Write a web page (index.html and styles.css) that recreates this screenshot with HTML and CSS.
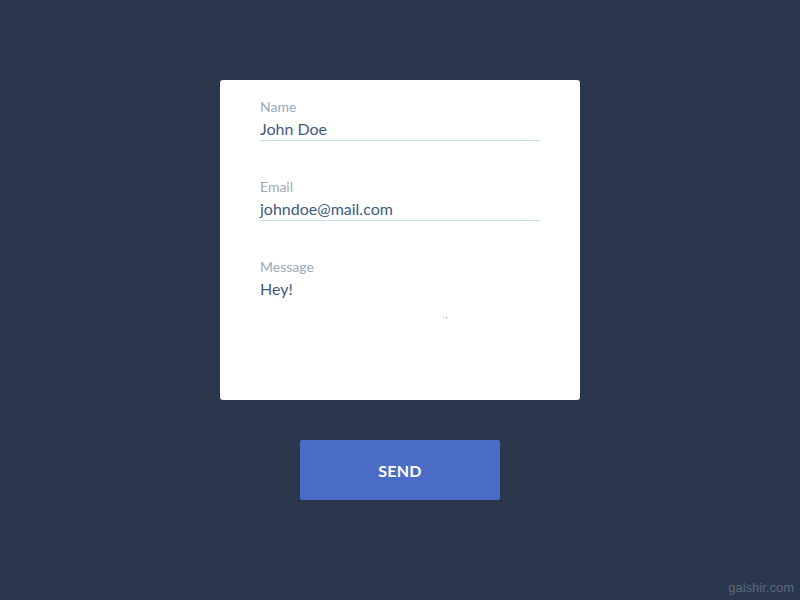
FILE: index.html
```html
<!DOCTYPE html>
<html>
<head>
<meta charset="utf-8">
<link rel="stylesheet" href="styles.css">
</head>
<body>
<div class="page">
  <form class="card">
    <div class="field">
      <div class="label">Name</div>
      <div class="value line">John Doe</div>
    </div>
    <div class="field">
      <div class="label">Email</div>
      <div class="value line">johndoe@mail.com</div>
    </div>
    <div class="field message">
      <div class="label">Message</div>
      <div class="value">Hey!</div>
      <div class="dot-row"><span class="dot"></span></div>
    </div>
  </form>
  <button class="send" type="button">SEND</button>
</div>
<div class="credit">galshir.com</div>
</body>
</html>
```
FILE: styles.css
```css
html, body {
  margin: 0;
  padding: 0;
  height: 100%;
}
body {
  background: #2a374d;
  font-family: Lato, "Open Sans", sans-serif;
  overflow: hidden;
}
.page {
  display: flex;
  flex-direction: column;
  align-items: center;
  padding-top: 80px;
}
.card {
  width: 360px;
  height: 320px;
  box-sizing: border-box;
  background: #ffffff;
  border-radius: 3px;
  padding: 19px 40px 0;
  margin: 0;
}
.field {
  display: flex;
  flex-direction: column;
  margin-bottom: 38px;
}
.label {
  font-size: 14px;
  line-height: 16px;
  color: #9aa9ba;
}
.value {
  font-size: 16px;
  line-height: 23px;
  color: #3f5a80;
  padding-top: 2px;
}
.line {
  border-bottom: 1px solid #c5e0e8;
}
.dot-row {
  display: flex;
  padding-left: 186px;
  padding-top: 17px;
}
.dot {
  width: 1px;
  height: 1px;
  background: #5b7aa3;
}
.send {
  margin-top: 40px;
  width: 200px;
  height: 60px;
  border: none;
  border-radius: 2px;
  background: #4a6cc7;
  color: #ffffff;
  font-family: Lato, sans-serif;
  font-weight: bold;
  font-size: 16px;
  letter-spacing: 0.2px;
  cursor: pointer;
}
.credit {
  position: absolute;
  right: 6px;
  bottom: 5px;
  font-family: "Liberation Sans", Arial, sans-serif;
  font-size: 13px;
  color: #5d687c;
}
```
